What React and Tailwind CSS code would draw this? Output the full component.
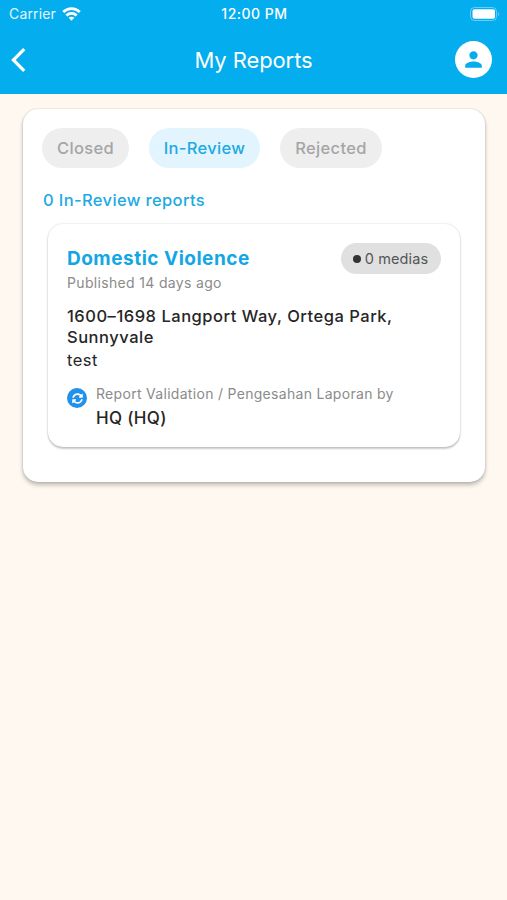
import React, { useState } from "react";
import { MdPerson } from "react-icons/md";
import { FaSyncAlt } from "react-icons/fa";

const filters = [
  { label: "Closed", width: "w-[87px]" },
  { label: "In-Review", width: "w-[111px]" },
  { label: "Rejected", width: "w-[102px]" },
];

const reports = [
  {
    title: "Domestic Violence",
    published: "Published 14 days ago",
    medias: 0,
    address: "1600–1698 Langport Way, Ortega Park, Sunnyvale",
    description: "test",
    step: "Report Validation / Pengesahan Laporan by",
    handler: "HQ (HQ)",
  },
];

function StatusBar() {
  return (
    <div className="grid grid-cols-3 items-center h-7 pl-[9px] pr-[7px] text-white">
      <div className="flex items-center gap-[6px]">
        <span className="-mt-px text-[14px] tracking-[0.15px] opacity-90">Carrier</span>
        <svg className="-mt-px" width="19" height="14" viewBox="0 0 19 14" fill="none" stroke="currentColor" strokeWidth="2.8">
          <path d="M1.2 5.1C5.9.5 13.1.5 17.8 5.1" />
          <path d="M4.4 8.5c2.9-2.8 7.3-2.8 10.2 0" />
          <path d="M9.5 13.8l-2.9-3c1.6-1.5 4.2-1.5 5.8 0z" fill="currentColor" stroke="none" />
        </svg>
      </div>
      <span className="-mt-[2px] text-center text-[14px] font-medium tracking-[0.5px] whitespace-nowrap">
        12:00 PM
      </span>
      <svg className="-mt-px justify-self-end" width="30" height="14" viewBox="0 0 30 14">
        <rect x="0.5" y="0.5" width="26" height="13" rx="4" fill="none" stroke="white" strokeOpacity="0.4" />
        <rect x="2.5" y="2.3" width="22.5" height="9.4" rx="2" fill="white" />
        <path d="M28 4.8c1.5.7 1.5 3.7 0 4.4z" fill="white" fillOpacity="0.4" />
      </svg>
    </div>
  );
}

function Header() {
  return (
    <header className="h-[94px] bg-[#03adee]">
      <StatusBar />
      <div className="grid grid-cols-[48px_1fr_48px] items-center h-[64px] pl-[11px] pr-[15px] text-white">
        <button>
          <svg width="15" height="24" viewBox="0 0 15 24" fill="none" stroke="currentColor" strokeWidth="3.2">
            <path d="M13.2 1.2L2.4 12l10.8 10.8" />
          </svg>
        </button>
        <h1 className="pl-[4px] text-center text-[22px] tracking-[-0.1px]">My Reports</h1>
        <button className="-mt-px justify-self-end flex items-center justify-center size-[37px] rounded-full bg-white text-[#03adee]">
          <MdPerson size={25} />
        </button>
      </div>
    </header>
  );
}

function ReportCard({ report }) {
  return (
    <article className="mx-[6px] h-[223px] rounded-[15px] bg-white px-[19px] pt-[19px] shadow-[0_0_2px_rgba(0,0,0,0.2),0_2px_2px_rgba(0,0,0,0.2)]">
      <div className="flex justify-between">
        <div>
          <h2 className="mt-[3px] text-[19px] leading-[26px] font-bold tracking-[0.5px] text-[#12a7e4]">
            {report.title}
          </h2>
          <p className="mt-[3px] text-[14px] leading-[16px] tracking-[0.33px] text-[#8b8b8b]">{report.published}</p>
        </div>
        <span className="flex items-center justify-center gap-[4px] w-[100px] h-[31px] rounded-full bg-[#e0e0e0] pr-px text-[14.5px] tracking-[0.1px] text-[#555]">
          <span className="size-2 rounded-full bg-[#333]" />
          {report.medias} medias
        </span>
      </div>
      <p className="mt-[15px] text-[16.5px] leading-[21px] font-medium tracking-[0.52px] text-[#262626]">
        {report.address}
      </p>
      <p className="mt-[2px] text-[16.5px] leading-[21px] tracking-[0.5px] text-[#262626]">{report.description}</p>
      <div className="mt-[14px] flex">
        <span className="mt-[3px] flex size-5 shrink-0 items-center justify-center rounded-full bg-[#2191ea] text-white">
          <FaSyncAlt size={11} />
        </span>
        <div className="ml-[9px]">
          <p className="text-[14px] leading-[18px] tracking-[0.3px] text-[#8b8b8b] whitespace-nowrap">{report.step}</p>
          <p className="mt-1 text-[17px] leading-[22px] font-medium tracking-[0.3px] text-[#262626]">{report.handler}</p>
        </div>
      </div>
    </article>
  );
}

export default function App() {
  const [active, setActive] = useState("In-Review");

  return (
    <div className="w-[507px] h-[900px] bg-[#fef8f1] font-['Inter',sans-serif]">
      <Header />
      <main className="ml-[23px] mr-[22px] mt-[15px] h-[373px] rounded-[15px] bg-white px-[19px] pt-[19px] shadow-[0_0_2px_rgba(0,0,0,0.18),0_3px_4px_rgba(0,0,0,0.25)]">
        <div className="flex gap-5">
          {filters.map(({ label, width }) => (
            <button
              key={label}
              onClick={() => setActive(label)}
              className={`h-10 rounded-full text-[16.5px] font-medium tracking-[0.3px] ${width} ${
                active === label ? "bg-[#e2f5fe] text-[#20a9e3]" : "bg-[#eeeeee] text-[#a5a5a5]"
              }`}
            >
              {label}
            </button>
          ))}
        </div>
        <p className="mt-[22px] mb-[14px] pl-px text-[16.5px] leading-[20px] font-medium tracking-[0.37px] text-[#20a9e3]">
          0 {active} reports
        </p>
        {reports.map((report) => (
          <ReportCard key={report.title} report={report} />
        ))}
      </main>
    </div>
  );
}
